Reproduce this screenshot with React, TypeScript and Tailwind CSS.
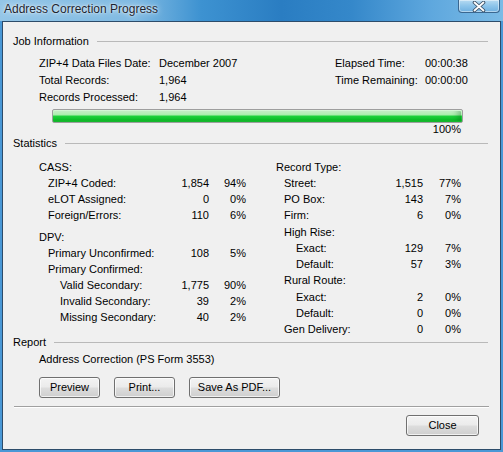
import type { ReactNode } from 'react';

const font = "font-['Liberation_Sans',Arial,sans-serif]";

type StatRowProps = {
  label: string;
  value?: string;
  pct?: string;
  indent?: string;
  labelWidth: string;
  pctWidth: string;
  height?: string;
};

function StatRow({ label, value, pct, indent = '', labelWidth, pctWidth, height = 'h-[16px]' }: StatRowProps) {
  return (
    <div className={`flex items-center ${height}`}>
      <span className={`${labelWidth} shrink-0 whitespace-nowrap ${indent}`}>{label}</span>
      <span className="w-[50px] text-right">{value}</span>
      <span className={`${pctWidth} text-right`}>{pct}</span>
    </div>
  );
}

function GroupHeader({ title, className }: { title: string; className: string }) {
  return (
    <div className={`flex items-center pl-[10px] pr-[12px] ${className}`}>
      <span className="whitespace-nowrap">{title}</span>
      <div className="ml-[8px] h-px flex-1 bg-[#b9b9b9]" />
    </div>
  );
}

function VistaButton({ children, className }: { children: ReactNode; className: string }) {
  return (
    <button
      type="button"
      className={`flex h-[21px] items-center justify-center rounded-[3px] border border-[#707070] bg-[linear-gradient(180deg,#f3f3f3_0%,#ebebeb_48%,#dddddd_52%,#cfcfcf_100%)] text-[11px] leading-none text-black shadow-[inset_0_0_0_1px_rgba(255,255,255,0.7)] ${className}`}
    >
      {children}
    </button>
  );
}

function CloseGlyph() {
  return (
    <svg width="14" height="11" viewBox="0 0 14 11" aria-hidden="true">
      <path
        d="M2.5 1.5 L11.5 9.5 M11.5 1.5 L2.5 9.5"
        stroke="#3b4f63"
        strokeWidth="3.6"
        strokeLinecap="round"
        fill="none"
      />
      <path
        d="M2.5 1.5 L11.5 9.5 M11.5 1.5 L2.5 9.5"
        stroke="#ffffff"
        strokeWidth="1.8"
        strokeLinecap="round"
        fill="none"
      />
    </svg>
  );
}

export default function App() {
  const left = 'w-[120px]';
  const right = 'w-[97px]';

  return (
    <div className={`flex h-[452px] w-[503px] flex-col bg-[#4a98d6] pb-[2px] ${font}`}>
      <header className="flex h-[21px] shrink-0 items-start justify-between bg-[linear-gradient(90deg,#94c6e7_0%,#80bae2_27%,#3d92d1_40%,#2a7dc2_56%,#3588ca_70%,#5fa8de_86%,#7bbbe6_100%)] pl-[4px] pr-[3px]">
        <span className="pt-[1px] text-[12px] leading-[16px] text-[#1b2430] [text-shadow:0_0_6px_rgba(255,255,255,0.9),0_0_2px_rgba(255,255,255,0.9)]">
          Address Correction Progress
        </span>
        <div className="flex h-[13px] w-[42px] items-center justify-center rounded-b-[4px] border border-t-0 border-[#3a6790] bg-[linear-gradient(180deg,#b7dbf2_0%,#8cc4ea_50%,#6fb0e0_100%)] shadow-[inset_0_0_0_1px_rgba(255,255,255,0.45)]">
          <CloseGlyph />
        </div>
      </header>

      <main className="mx-[2px] flex flex-1 flex-col border border-[#2d4c6a] bg-[#f0f0f0] text-[11px] text-black">
        <GroupHeader title="Job Information" className="mt-[11px] h-[16px]" />

        <div className="mt-[6px] pl-[36px]">
          <div className="flex h-[17px] items-center">
            <span className="w-[120px]">ZIP+4 Data Files Date:</span>
            <span className="w-[176px]">December 2007</span>
            <span className="w-[90px]">Elapsed Time:</span>
            <span>00:00:38</span>
          </div>
          <div className="flex h-[17px] items-center">
            <span className="w-[120px]">Total Records:</span>
            <span className="w-[176px]">1,964</span>
            <span className="w-[90px]">Time Remaining:</span>
            <span>00:00:00</span>
          </div>
          <div className="flex h-[17px] items-center">
            <span className="w-[120px]">Records Processed:</span>
            <span>1,964</span>
          </div>
        </div>

        <div className="ml-[49px] mt-[3px] h-[14px] w-[411px] rounded-[2px] border border-[#9e9e9e] bg-[linear-gradient(180deg,#d9f8d9_0%,#a8eeaa_42%,#1fd23c_50%,#0fc12b_80%,#18b52f_100%)] p-px">
          <div className="h-full w-full rounded-[1px] shadow-[inset_-6px_0_6px_-3px_rgba(0,90,20,0.35)]" />
        </div>
        <div className="h-[13px] w-[458px] text-right leading-[13px]">100%</div>

        <GroupHeader title="Statistics" className="h-[14px]" />

        <div className="mt-[9px] flex h-[176px] pl-[36px]">
          <div className="w-[207px]">
            <StatRow label="CASS:" labelWidth={left} pctWidth="w-[37px]" />
            <StatRow label="ZIP+4 Coded:" value="1,854" pct="94%" indent="pl-[9px]" labelWidth={left} pctWidth="w-[37px]" />
            <StatRow label="eLOT Assigned:" value="0" pct="0%" indent="pl-[9px]" labelWidth={left} pctWidth="w-[37px]" />
            <StatRow label="Foreign/Errors:" value="110" pct="6%" indent="pl-[9px]" labelWidth={left} pctWidth="w-[37px]" />
            <div className="mt-[6px]">
              <StatRow label="DPV:" labelWidth={left} pctWidth="w-[37px]" />
              <StatRow label="Primary Unconfirmed:" value="108" pct="5%" indent="pl-[9px]" labelWidth={left} pctWidth="w-[37px]" />
              <StatRow label="Primary Confirmed:" indent="pl-[9px]" labelWidth={left} pctWidth="w-[37px]" />
              <StatRow label="Valid Secondary:" value="1,775" pct="90%" indent="pl-[21px]" labelWidth={left} pctWidth="w-[37px]" />
              <StatRow label="Invalid Secondary:" value="39" pct="2%" indent="pl-[21px]" labelWidth={left} pctWidth="w-[37px]" />
              <StatRow label="Missing Secondary:" value="40" pct="2%" indent="pl-[21px]" labelWidth={left} pctWidth="w-[37px]" />
            </div>
          </div>
          <div className="ml-[30px] w-[185px]">
            <StatRow label="Record Type:" labelWidth={right} pctWidth="w-[38px]" />
            <StatRow label="Street:" value="1,515" pct="77%" indent="pl-[8px]" labelWidth={right} pctWidth="w-[38px]" />
            <StatRow label="PO Box:" value="143" pct="7%" indent="pl-[8px]" labelWidth={right} pctWidth="w-[38px]" />
            <StatRow label="Firm:" value="6" pct="0%" indent="pl-[8px]" labelWidth={right} pctWidth="w-[38px]" height="h-[17px]" />
            <StatRow label="High Rise:" indent="pl-[8px]" labelWidth={right} pctWidth="w-[38px]" />
            <StatRow label="Exact:" value="129" pct="7%" indent="pl-[20px]" labelWidth={right} pctWidth="w-[38px]" />
            <StatRow label="Default:" value="57" pct="3%" indent="pl-[20px]" labelWidth={right} pctWidth="w-[38px]" />
            <StatRow label="Rural Route:" indent="pl-[8px]" labelWidth={right} pctWidth="w-[38px]" height="h-[17px]" />
            <StatRow label="Exact:" value="2" pct="0%" indent="pl-[20px]" labelWidth={right} pctWidth="w-[38px]" />
            <StatRow label="Default:" value="0" pct="0%" indent="pl-[20px]" labelWidth={right} pctWidth="w-[38px]" />
            <StatRow label="Gen Delivery:" value="0" pct="0%" indent="pl-[8px]" labelWidth={right} pctWidth="w-[38px]" />
          </div>
        </div>

        <GroupHeader title="Report" className="h-[14px]" />
        <div className="mt-[2px] flex h-[16px] items-center pl-[36px]">Address Correction (PS Form 3553)</div>

        <div className="mt-[10px] flex gap-[14px] pl-[36px]">
          <VistaButton className="w-[61px]">Preview</VistaButton>
          <VistaButton className="w-[61px]">Print...</VistaButton>
          <VistaButton className="w-[91px]">Save As PDF...</VistaButton>
        </div>

        <div className="mx-[11px] mt-[8px] h-px bg-[#a0a0a0]" />
        <div className="mx-[11px] h-px bg-white" />

        <div className="mt-[7px] flex justify-end pr-[21px]">
          <VistaButton className="w-[73px]">Close</VistaButton>
        </div>
      </main>
    </div>
  );
}
